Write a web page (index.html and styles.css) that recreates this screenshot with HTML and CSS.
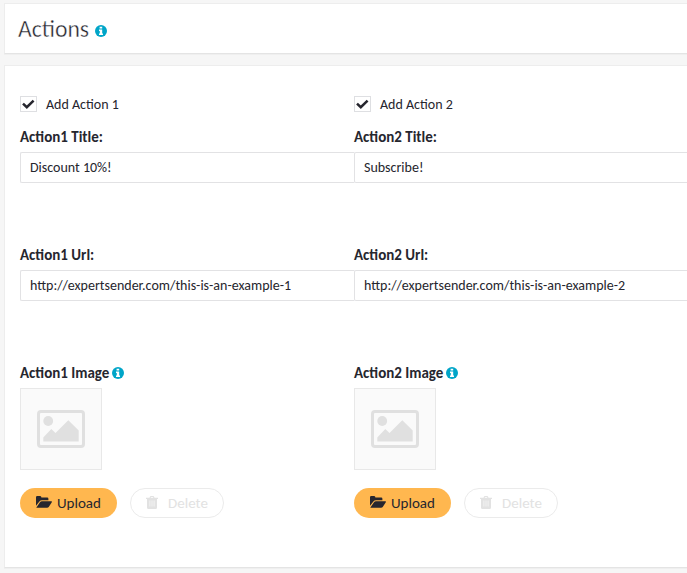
FILE: index.html
```html
<!DOCTYPE html>
<html lang="en">
<head>
<meta charset="utf-8">
<title>Actions</title>
<link rel="stylesheet" href="styles.css">
</head>
<body>
<svg class="defs" aria-hidden="true">
  <symbol id="info" viewBox="0 0 12 12"><circle cx="6" cy="6" r="6" fill="#00a5c8"/><path d="M4.6 1.8h2.6v1.8H4.6zM4 4.6h3.2v4H8V10H4V8.6h.8V6H4z" fill="#fff"/></symbol>
  <symbol id="check" viewBox="0 0 15 14"><path d="M2 6.6 5.8 10.2 12.6 3.6" fill="none" stroke="#26262e" stroke-width="2.5"/></symbol>
  <symbol id="picture" viewBox="0 0 48 38"><rect x="1.5" y="1.5" width="45" height="35" rx="2.5" fill="none" stroke="#e0e0e0" stroke-width="3"/><circle cx="11.2" cy="11" r="4.9" fill="#e0e0e0"/><path d="M6.3 31.5v-4l8-8.4 4.2 4L31.3 10.3 41.7 20.5v11z" fill="#e0e0e0"/></symbol>
  <symbol id="folder" viewBox="0 0 16 12"><path d="M0 9.7V1.2Q0 0 1.2 0h3Q5.4 0 5.4 1.6h5.8q1.2 0 1.2 1.2v1.4H6Q4.3 4.2 3.4 5.4zM.4 11.4 4 6.3q.7-1 2-1h9.5q.8 0 .3.9l-2.9 4.5q-.6 1-1.9 1H.8q-.6 0-.4-.3z" fill="#26262e"/></symbol>
  <symbol id="trash" viewBox="0 0 12 13"><path fill="#e2e2e2" fill-rule="evenodd" d="M3.5 1.7 4 .5Q4.2 0 4.8 0h2.4q.6 0 .8.5l.5 1.2H12v1.2h-1V11.4q0 1.6-1.4 1.6H2.4Q1 13 1 11.4V2.9H0V1.7zm1.2 0h2.6L7 1H5z"/><path d="M3.9 4.5v6M6 4.5v6m2.1-6v6" stroke="#fff" stroke-width=".6"/></symbol>
</svg>
<header class="panel heading"><h1>Actions</h1><svg class="info"><use href="#info"/></svg></header>
<main class="panel content">
  <section class="action">
    <label class="toggle"><span class="box"><svg><use href="#check"/></svg></span><span class="name">Add Action 1</span></label>
    <div class="field"><div class="caption">Action1 Title:</div><div class="input">Discount 10%!</div></div>
    <div class="field"><div class="caption">Action1 Url:</div><div class="input">http://expertsender.com/this-is-an-example-1</div></div>
    <div class="caption">Action1 Image<svg class="info"><use href="#info"/></svg></div>
    <div class="thumb"><svg><use href="#picture"/></svg></div>
    <div class="buttons">
      <button class="upload"><svg><use href="#folder"/></svg>Upload</button>
      <button class="delete" disabled><svg><use href="#trash"/></svg>Delete</button>
    </div>
  </section>
  <section class="action">
    <label class="toggle"><span class="box"><svg><use href="#check"/></svg></span><span class="name">Add Action 2</span></label>
    <div class="field"><div class="caption">Action2 Title:</div><div class="input">Subscribe!</div></div>
    <div class="field"><div class="caption">Action2 Url:</div><div class="input">http://expertsender.com/this-is-an-example-2</div></div>
    <div class="caption">Action2 Image<svg class="info"><use href="#info"/></svg></div>
    <div class="thumb"><svg><use href="#picture"/></svg></div>
    <div class="buttons">
      <button class="upload"><svg><use href="#folder"/></svg>Upload</button>
      <button class="delete" disabled><svg><use href="#trash"/></svg>Delete</button>
    </div>
  </section>
</main>
</body>
</html>
```
FILE: styles.css
```css
* { box-sizing: border-box; }
body {
  margin: 0;
  padding: 3px 0 0 4px;
  height: 573px;
  overflow: hidden;
  background: #f6f6f6;
  color: #26262e;
  font: 14px/18px Carlito, "Open Sans", sans-serif;
}
.defs { position: absolute; width: 0; height: 0; }
svg { display: block; flex: none; }
.panel {
  background: #fff;
  border: 1px solid #ededed;
  border-right: 0;
  border-bottom-color: #e4e4e4;
  box-shadow: 0 1px 0 #efefef;
}
.heading { display: flex; align-items: center; height: 51px; padding-left: 13px; }
h1 {
  margin: 0;
  width: 76.5px;
  font-size: 23.7px;
  line-height: 30px;
  font-weight: 400;
  -webkit-text-stroke: .4px #fff;
}
.info { width: 12px; height: 12px; }
.heading .info { margin-top: 5px; }
.content { display: flex; height: 503px; margin-top: 11px; padding: 29px 0 0 15px; }
.action { flex: 0 0 334px; min-width: 0; }
.action:last-child { flex: 1; }
.toggle { display: flex; align-items: center; height: 18px; gap: 9px; }
.name { padding-top: 2px; }
.box { width: 17px; height: 16px; border: 1px solid #dedfe2; }
.box svg { width: 15px; height: 14px; }
.field { height: 118px; }
.toggle + .field { margin-top: 15px; }
.caption { display: flex; align-items: center; gap: 3px; height: 18px; font-size: 15px; line-height: 20px; font-weight: 700; }
.input {
  height: 31px;
  margin-top: 6px;
  padding: 6px 9px;
  background: #fff;
  border: 1px solid #e2e2e4;
  border-right: 0;
  border-radius: 2px 0 0 2px;
}
.thumb {
  display: grid;
  place-content: center;
  width: 82px;
  height: 82px;
  margin-top: 6px;
  border: 1px solid #e8e8e8;
  background: #fafafa;
}
.thumb svg { width: 48px; height: 38px; }
.buttons { display: flex; gap: 13px; margin-top: 18px; }
button {
  display: flex;
  align-items: center;
  height: 30px;
  padding: 0 0 0 16px;
  border: 0;
  border-radius: 15px;
  font: inherit;
  font-size: 15px;
  color: #26262e;
}
.upload { width: 97px; gap: 5px; background: #ffb74f; }
.upload svg { width: 16px; height: 12px; margin-bottom: 2px; }
.delete { width: 94px; gap: 10px; padding-left: 15px; border: 1px solid #ebebeb; background: #fff; color: #e2e2e2; }
.delete svg { width: 12px; height: 13px; margin-bottom: 1px; }
```
